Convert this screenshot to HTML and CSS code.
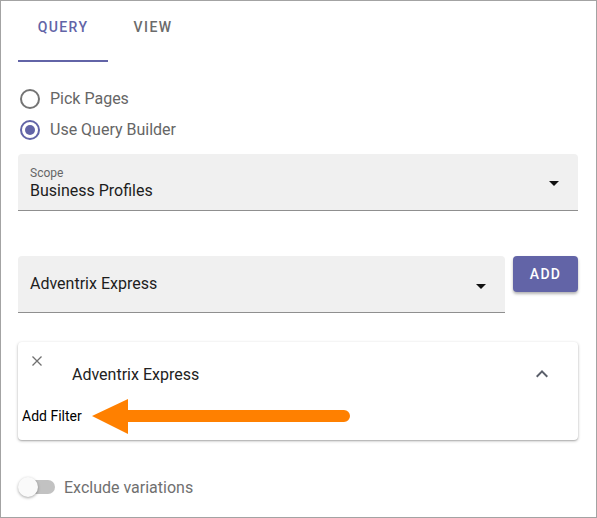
FILE: index.html
```html
<!DOCTYPE html>
<html>
<head>
<meta charset="utf-8">
<link rel="stylesheet" href="styles.css">
</head>
<body>
<div class="frame">
  <div class="tabs">
    <div class="tab active">Query</div>
    <div class="tab">View</div>
  </div>

  <div class="radios">
    <label class="radio-row">
      <span class="radio"></span>
      <span class="radio-label">Pick Pages</span>
    </label>
    <label class="radio-row">
      <span class="radio checked"><span class="dot"></span></span>
      <span class="radio-label">Use Query Builder</span>
    </label>
  </div>

  <div class="field scope">
    <div class="field-text">
      <div class="field-label">Scope</div>
      <div class="field-value">Business Profiles</div>
    </div>
    <span class="caret"></span>
  </div>

  <div class="add-row">
    <div class="field picker">
      <div class="field-value">Adventrix Express</div>
      <span class="caret"></span>
    </div>
    <button class="btn-add">Add</button>
  </div>

  <div class="card">
    <div class="card-head">
      <svg class="close-icon" width="10" height="10" viewBox="0 0 10 10">
        <path d="M0.5 0.5 L9.5 9.5 M9.5 0.5 L0.5 9.5" stroke="#707070" stroke-width="1.3" fill="none"/>
      </svg>
      <div class="card-title">Adventrix Express</div>
      <svg class="chev" width="24" height="24" viewBox="0 0 24 24">
        <path d="M12 8l-6 6 1.41 1.41L12 10.83l4.59 4.58L18 14z" fill="#5a5f6a"/>
      </svg>
    </div>
    <div class="card-filter">Add Filter</div>
  </div>

  <div class="toggle-row">
    <span class="switch"><span class="track"></span><span class="thumb"></span></span>
    <span class="toggle-label">Exclude variations</span>
  </div>

  <svg class="annot-arrow" width="264" height="40" viewBox="0 0 264 40">
    <path d="M1 18 L37 1 L37 12 L253 12 A6 6 0 0 1 253 24 L37 24 L37 36 Z" fill="#ff8000"/>
  </svg>
</div>
</body>
</html>
```

FILE: styles.css
```css
* { box-sizing: border-box; }
html, body { margin: 0; padding: 0; background: #fff; }
body { font-family: Roboto, "Noto Sans", sans-serif; }

.frame {
  position: relative;
  width: 597px;
  height: 518px;
  border: 1px solid #a3a3a3;
  padding: 0 18px 0 17px;
  display: flex;
  flex-direction: column;
  overflow: hidden;
}

.tabs { display: flex; height: 61px; }
.tab {
  width: 90px;
  height: 61px;
  display: flex;
  align-items: flex-start;
  justify-content: center;
  padding-top: 18px;
  font-size: 14px;
  font-weight: 500;
  letter-spacing: 1.4px;
  text-transform: uppercase;
  color: #6b6b6b;
  border-bottom: 2px solid transparent;
}
.tab.active { color: #6264a7; border-bottom-color: #6264a7; }

.radios { margin-top: 21px; display: flex; flex-direction: column; }
.radio-row { height: 31px; display: flex; align-items: center; padding-left: 2px; }
.radio {
  width: 20px; height: 20px; border-radius: 50%;
  border: 2px solid #747474;
  display: flex; align-items: center; justify-content: center;
}
.radio.checked { border-color: #6264a7; }
.dot { width: 10px; height: 10px; border-radius: 50%; background: #6264a7; }
.radio-label { margin-left: 10px; font-size: 16px; color: #666; }

.field {
  background: #f0f0f0;
  border-radius: 4px 4px 0 0;
  border-bottom: 1px solid #8f8f8f;
  display: flex;
  align-items: center;
  padding: 0 19px 0 12px;
  height: 57px;
}
.scope { margin-top: 9px; align-items: flex-start; }
.scope .field-text { padding-top: 11px; flex: 1; }
.scope .caret { margin-top: 27px; }
.field-label { font-size: 12px; line-height: 16px; color: #666; }
.field-value { font-size: 16px; line-height: 20px; color: #1d1d1d; flex: 1; }
.caret {
  width: 0; height: 0;
  border-left: 5px solid transparent;
  border-right: 5px solid transparent;
  border-top: 5px solid #111;
}

.add-row { margin-top: 45px; display: flex; align-items: flex-start; gap: 8px; }
.picker { flex: 1; height: 57px; }
.picker .caret { margin-top: 4px; }
.btn-add {
  width: 65px; height: 36px;
  border: 0; border-radius: 4px;
  background: #6264a7;
  color: #fff;
  font-family: Roboto, "Noto Sans", sans-serif;
  font-size: 14px; font-weight: 500;
  letter-spacing: 1.25px;
  text-transform: uppercase;
  box-shadow: 0 2px 3px rgba(0,0,0,0.3);
  padding: 0;
}

.card {
  margin-top: 29px;
  background: #fff;
  border-radius: 4px;
  box-shadow: 0 1px 3px rgba(0,0,0,0.3), 0 1px 1px rgba(0,0,0,0.1);
  height: 98px;
  display: flex;
  flex-direction: column;
}
.card-head {
  height: 64px;
  display: flex;
  align-items: center;
  padding-left: 14px;
  padding-right: 24px;
}
.close-icon { align-self: flex-start; margin-top: 14px; }
.card-title { margin-left: 30px; flex: 1; font-size: 16px; color: #222; }
.card-filter { padding-left: 4px; font-size: 14px; line-height: 20px; color: #000; }

.toggle-row { margin-top: 37px; height: 20px; display: flex; align-items: center; }
.switch { position: relative; width: 37px; height: 20px; display: inline-block; }
.track {
  position: absolute; left: 3px; top: 3px; width: 34px; height: 14px;
  border-radius: 7px; background: #c2c2c2;
}
.thumb {
  position: absolute; left: 0; top: 0; width: 20px; height: 20px;
  border-radius: 50%; background: #fafafa;
  box-shadow: 0 1px 3px rgba(0,0,0,0.35);
}
.toggle-label { margin-left: 9px; font-size: 16px; color: #707070; }

.annot-arrow { position: absolute; left: 90px; top: 397px; }
```
